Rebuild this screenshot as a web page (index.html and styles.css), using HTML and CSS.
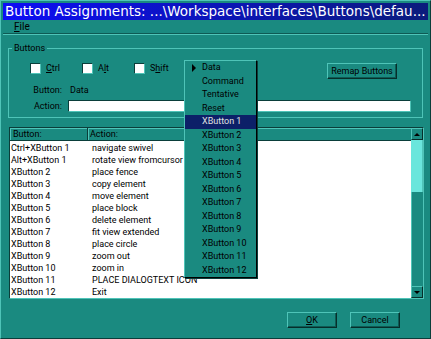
FILE: index.html
```html
<!DOCTYPE html>
<html lang="en">

<head>
    <meta charset="UTF-8">
    <meta name="viewport" content="width=device-width, initial-scale=1.0">
    <title>Button Assignments</title>
    <link rel="stylesheet" href="styles.css">
</head>

<body>
    <div class="window">
        <div class="titlebar">Button Assignments: ...\Workspace\interfaces\Buttons\defau...</div>

        <div class="menubar">
            <span class="menu-item"><u>F</u>ile</span>
        </div>

        <div class="content">
            <fieldset class="group">
                <legend>Buttons</legend>

                <div class="mods">
                    <label class="check"><span class="box"></span><span><u>C</u>trl</span></label>
                    <label class="check"><span class="box"></span><span>A<u>l</u>t</span></label>
                    <label class="check"><span class="box"></span><span>S<u>h</u>ift</span></label>
                    <div class="combo"></div>
                    <button class="btn remap-btn">Remap Buttons</button>
                </div>

                <div class="field">
                    <span class="field-label">Button:</span>
                    <span class="field-value">Data</span>
                </div>

                <div class="field">
                    <span class="field-label">Action:</span>
                    <div class="action-input"></div>
                </div>
            </fieldset>

            <div class="listview">
                <div class="lv-main">
                    <div class="lv-head">
                        <span class="lv-col lv-col-1">Button:</span>
                        <span class="lv-col lv-col-2">Action:</span>
                    </div>
                    <div class="lv-body" id="rows"></div>
                </div>

                <div class="scrollbar">
                    <div class="sb-btn"><span class="tri-up"></span></div>
                    <div class="sb-thumb"></div>
                    <div class="sb-track"></div>
                    <div class="sb-btn"><span class="tri-down"></span></div>
                </div>
            </div>

            <div class="footer">
                <button class="btn"><u>O</u>K</button>
                <button class="btn">Cancel</button>
            </div>
        </div>

        <!-- popup list opened from the button combo -->
        <ul class="dropdown" id="dropdown"></ul>
    </div>

    <script>
        const assignments = [
            ['Ctrl+XButton 1', 'navigate swivel'],
            ['Alt+XButton 1', 'rotate view fromcursor'],
            ['XButton 2', 'place fence'],
            ['XButton 3', 'copy element'],
            ['XButton 4', 'move element'],
            ['XButton 5', 'place block'],
            ['XButton 6', 'delete element'],
            ['XButton 7', 'fit view extended'],
            ['XButton 8', 'place circle'],
            ['XButton 9', 'zoom out'],
            ['XButton 10', 'zoom in'],
            ['XButton 11', 'PLACE DIALOGTEXT ICON'],
            ['XButton 12', 'Exit'],
        ];

        const rows = document.getElementById('rows');
        assignments.forEach(function (a) {
            const row = document.createElement('div');
            row.className = 'lv-row';
            row.innerHTML = '<span>' + a[0] + '</span><span>' + a[1] + '</span>';
            rows.appendChild(row);
        });

        const options = ['Data', 'Command', 'Tentative', 'Reset'];
        for (let i = 1; i <= 12; i++) {
            options.push('XButton ' + i);
        }

        const dropdown = document.getElementById('dropdown');
        options.forEach(function (name) {
            const li = document.createElement('li');
            li.textContent = name;
            if (name === 'Data') li.className = 'has-arrow';
            if (name === 'XButton 1') li.className = 'selected';
            dropdown.appendChild(li);
        });
    </script>
</body>

</html>
```

FILE: styles.css
```css
* {
    margin: 0;
    padding: 0;
    box-sizing: border-box;
}

body {
    width: 431px;
    height: 339px;
    overflow: hidden;
    background: #1a8a80;
    font-family: Roboto, 'Liberation Sans', Arial, sans-serif;
    font-size: 9px;
    color: #000;
}

.window {
    position: relative;
    width: 431px;
    height: 339px;
    background: #1a8a80;
    border: 1px solid;
    border-color: #4fc4b8 #0a3e3a #0a3e3a #4fc4b8;
    padding: 2px;
    display: flex;
    flex-direction: column;
}

.titlebar {
    height: 17px;
    padding-left: 2px;
    background: linear-gradient(to right, #0d0df5, #0b1c7c);
    color: #fff;
    font-family: 'DejaVu Sans', sans-serif;
    font-size: 13.5px;
    line-height: 17px;
    white-space: nowrap;
    overflow: hidden;
}

.menubar {
    height: 15px;
    padding-left: 11px;
    border-bottom: 1px solid #4fc4b8;
    box-shadow: inset 0 -1px 0 #0e5a54;
    font-size: 10px;
    line-height: 13px;
}

.content {
    flex: 1;
    display: flex;
    flex-direction: column;
}

/* group box */
.group {
    margin: 7px 5px 0 5px;
    padding: 6px 0 5px 0;
    border: 1px solid #4fc4b8;
}

.group legend {
    margin-left: 3px;
    padding: 0 2px;
    line-height: 12px;
}

.mods {
    height: 20px;
    padding-left: 21px;
    display: flex;
    align-items: flex-start;
}

.check {
    width: 52px;
    margin-top: 3px;
    display: flex;
    align-items: center;
    gap: 5px;
    line-height: 11px;
}

.box {
    width: 11px;
    height: 11px;
    background: #fff;
    border: 1px solid;
    border-color: #0a3e3a #4fc4b8 #4fc4b8 #0a3e3a;
}

.combo {
    width: 72px;
    height: 16px;
    margin-left: -2px;
}

.btn {
    width: 50px;
    height: 16px;
    background: #1a8a80;
    border: 1px solid;
    border-color: #4fc4b8 #062e2a #062e2a #4fc4b8;
    box-shadow: inset -1px -1px 0 #0e5a54;
    font-family: inherit;
    font-size: 9px;
    color: #000;
    white-space: nowrap;
}

.remap-btn {
    width: 70px;
    margin-top: 3px;
    margin-left: auto;
    margin-right: 25px;
}

.field {
    display: grid;
    grid-template-columns: 44px 1fr;
    column-gap: 6px;
    padding-left: 9px;
    margin-right: 11px;
    align-items: center;
}

.field:nth-of-type(2) {
    height: 20px;
}

.field-label {
    text-align: right;
}

.field-value {
    padding-left: 2px;
}

.action-input {
    height: 12px;
    background: #fff;
    border: 1px solid;
    border-color: #0a3e3a #4fc4b8 #4fc4b8 #0a3e3a;
}

/* list view */
.listview {
    height: 172px;
    margin: 9px 4px 0 6px;
    border: 1px solid;
    border-color: #0a3e3a #4fc4b8 #4fc4b8 #0a3e3a;
    display: flex;
}

.lv-main {
    flex: 1;
    display: flex;
    flex-direction: column;
}

.lv-head {
    height: 14px;
    display: flex;
    border-bottom: 1px solid #0a3e3a;
    line-height: 12px;
}

.lv-col {
    padding-left: 3px;
    box-shadow: inset 1px 1px 0 #4fc4b8;
}

.lv-col-1 {
    width: 78px;
    border-right: 1px solid #0a3e3a;
}

.lv-col-2 {
    flex: 1;
    padding-left: 2px;
}

.lv-body {
    flex: 1;
    background: #fff;
    padding-top: 1px;
}

.lv-row {
    height: 12px;
    line-height: 12px;
    padding-left: 1px;
    display: grid;
    grid-template-columns: 81px 1fr;
    white-space: nowrap;
}

.scrollbar {
    width: 12px;
    display: flex;
    flex-direction: column;
}

.sb-btn {
    height: 12px;
    background: #1a8a80;
    border: 1px solid;
    border-color: #4fc4b8 #062e2a #062e2a #4fc4b8;
    display: flex;
    align-items: center;
    justify-content: center;
}

.tri-up,
.tri-down {
    width: 0;
    height: 0;
    border-left: 3px solid transparent;
    border-right: 3px solid transparent;
}

.tri-up {
    border-bottom: 3px solid #000;
}

.tri-down {
    border-top: 3px solid #000;
}

.sb-thumb {
    height: 52px;
    background: #6ae6dc;
    border-right: 1px solid #4fc4b8;
}

.sb-track {
    flex: 1;
    background: #1a8a80;
    border-left: 1px solid #4fc4b8;
}

.footer {
    margin-top: 13px;
    margin-right: 28px;
    display: flex;
    justify-content: flex-end;
    gap: 13px;
}

/* popup list */
.dropdown {
    position: absolute;
    left: 183px;
    top: 59px;
    width: 73px;
    list-style: none;
    background: #1a8a80;
    border: 1px solid;
    border-color: #4fc4b8 #000 #000 #4fc4b8;
    box-shadow: 1px 1px 0 #0a3e3a;
}

.dropdown li {
    position: relative;
    height: 13.5px;
    line-height: 13.5px;
    padding-left: 17px;
    white-space: nowrap;
}

.dropdown li.selected {
    background: #0c2068;
    color: #e0e0e0;
}

.dropdown li.has-arrow::before {
    content: '';
    position: absolute;
    left: 7px;
    top: 3px;
    border-top: 4px solid transparent;
    border-bottom: 4px solid transparent;
    border-left: 4px solid #000;
}
```
